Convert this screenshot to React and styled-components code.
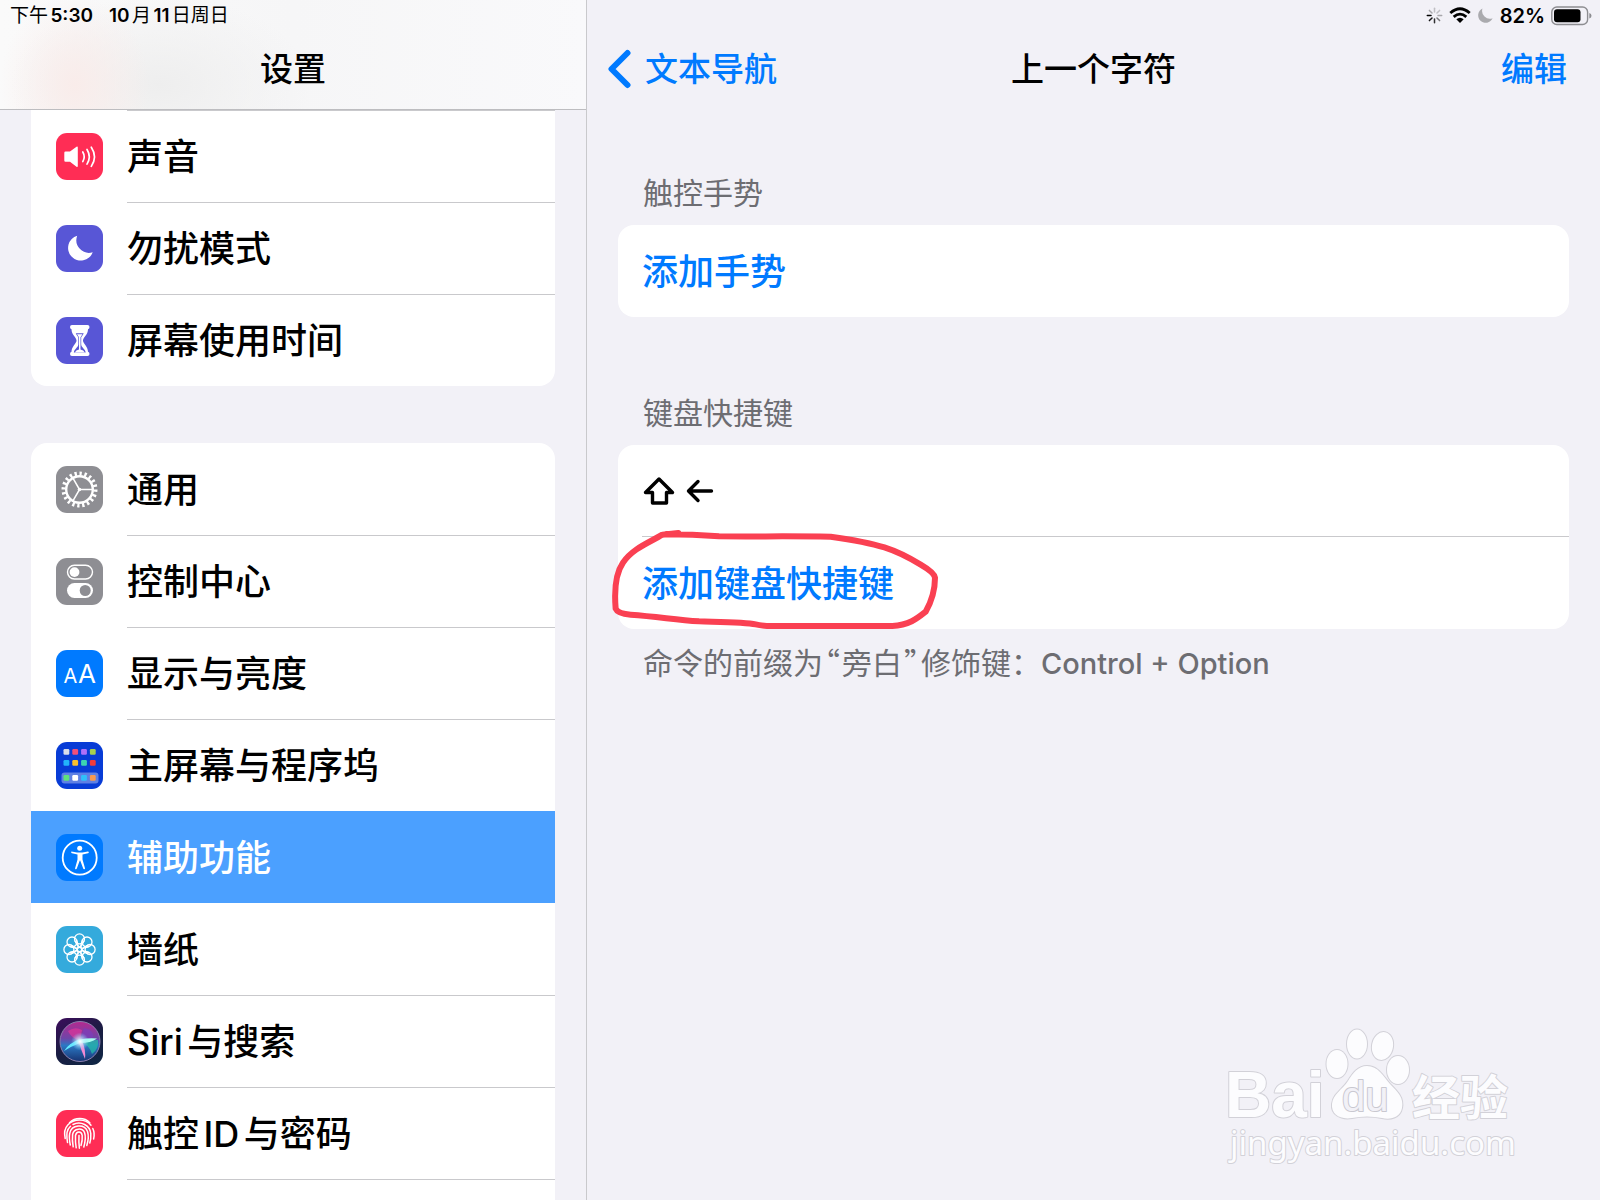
import React, { Component } from 'react';
import styled, { createGlobalStyle } from 'styled-components';

const BLUE = '#007aff';
const LINE = '#c9c9cc';

const GlobalStyle = createGlobalStyle`
  * {
    box-sizing: border-box;
  }
  body {
    margin: 0;
    background: #f2f1f7;
    font-family: Inter, "Noto Sans CJK SC", sans-serif;
    text-autospace: normal;
    color: #000;
  }
  ul {
    margin: 0;
    padding: 0;
    list-style: none;
  }
  button {
    padding: 0;
    border: 0;
    background: none;
    font: inherit;
    text-align: left;
    cursor: pointer;
  }
`;

const Page = styled.div`
  position: relative;
  display: flex;
  height: 100vh;
  overflow: hidden;
`;
const Sidebar = styled.nav`
  flex: 0 0 587px;
  border-right: 1px solid ${LINE};
`;
const SidebarHeader = styled.header`
  height: 110px;
  border-bottom: 1px solid #bdbdc0;
  background:
    radial-gradient(ellipse 75px 90px at 75px 85px, #f9ecea 0%, rgba(249, 236, 234, 0) 100%),
    radial-gradient(ellipse 150px 90px at 160px 85px, #eeeeee 0%, rgba(238, 238, 238, 0) 100%),
    linear-gradient(90deg, #fafafa, #f6f6f7 50%, #f9f9fb);
`;
const StatusBar = styled.div`
  display: flex;
  align-items: center;
  justify-content: ${props => (props.$end ? 'flex-end' : 'flex-start')};
  gap: ${props => (props.$end ? '6px' : '16px')};
  height: 31px;
  padding: 0 ${props => (props.$end ? '8px' : '10px')};
  font-size: ${props => (props.$end ? '20px' : '19px')};
  line-height: 24px;
  font-weight: 600;
`;
const Time = styled.span`
  font-weight: 400;

  b {
    font-weight: 600;
  }
`;
const NavBar = styled.div`
  display: grid;
  grid-template-columns: 1fr auto 1fr;
  align-items: center;
  height: 76px;
  padding: 0 33px 0 20px;
`;
const Title = styled.h1`
  grid-column: 2;
  margin: 0 0 0 13px;
  font-size: 33px;
  line-height: 48px;
  font-weight: 500;
`;
const NavButton = styled.button`
  display: flex;
  align-items: center;
  gap: 13px;
  justify-self: ${props => (props.$end ? 'end' : 'start')};
  color: ${BLUE};
  font-size: 33px;
  line-height: 48px;
  font-weight: 500;
`;
const MenuScroll = styled.div`
  display: flex;
  flex-direction: column;
  gap: 57px;
  padding: 0 31px;
`;
const MenuCard = styled.ul`
  overflow: hidden;
  border-radius: ${props => (props.$cut ? '0 0 16px 16px' : '16px')};
  background: #fff;
`;
const MenuLabel = styled.span`
  display: flex;
  flex: 1;
  align-items: center;
  align-self: stretch;
  padding-bottom: 5px;
  border-top: 1px solid ${props => (props.$line ? LINE : 'transparent')};
`;
const MenuRow = styled.button`
  display: flex;
  align-items: center;
  gap: 24px;
  width: 100%;
  height: 92px;
  padding-left: 25px;
  background: ${props => (props.$active ? '#4ba0ff' : 'transparent')};
  color: ${props => (props.$active ? '#fff' : '#000')};
  font-size: 36px;
  font-weight: 500;
`;
const NextRow = styled.li`
  height: 92px;
  margin-left: 96px;
  border-top: 1px solid ${LINE};
`;
const Tile = styled.svg`
  flex: none;
  width: 47px;
  height: 47px;
  border-radius: 11px;
  background: ${props => props.$bg};
`;

const Detail = styled.main`
  flex: 1;
  min-width: 0;
`;
const Groups = styled.div`
  display: flex;
  flex-direction: column;
  gap: 76px;
  padding: 66px 31px 0;
`;
const GroupTitle = styled.h2`
  margin: 0 25px 12px;
  color: #6d6d72;
  font-size: 30px;
  line-height: 40px;
  font-weight: 400;
`;
const Card = styled.ul`
  border-radius: 16px;
  background: #fff;
`;
const CardRow = styled.li`
  position: relative;
  display: flex;
  height: 92px;
  margin-left: 24px;
  border-bottom: 1px solid ${props => (props.$line ? LINE : 'transparent')};
`;
const Action = styled.button`
  flex: 1;
  padding-bottom: 4px;
  color: ${BLUE};
  font-size: 36px;
  font-weight: 500;
`;
const Shortcut = styled.span`
  display: flex;
  align-items: center;
  gap: 10px;
`;
const Footnote = styled.p`
  margin: 12px 25px 0;
  color: #6d6d72;
  font-size: 30px;
  line-height: 40px;
`;
const Quote = styled.span`
  padding: 0 2px;
  font-family: "Noto Sans CJK SC", sans-serif;
  font-feature-settings: "halt";
`;
const Keys = styled.span`
  font-size: 29px;
  font-weight: 500;
`;
const Marker = styled.svg`
  position: absolute;
  left: -33px;
  top: -11px;
  width: 334px;
  height: 107px;
  pointer-events: none;
`;
const Watermark = styled.svg`
  position: absolute;
  right: 80px;
  bottom: 30px;
  width: 300px;
  height: 150px;
`;

const SoundIcon = () => (
  <Tile viewBox="0 0 47 47" $bg="#ff2d55">
    <path d="M9.5 18.5h4.5l6.5-4.8q1.3-.6 1.3.8v18.5q0 1.4-1.3.8L14 28.8H9.5q-1.2 0-1.2-1.2v-7.9q0-1.2 1.2-1.2z" fill="#fff" />
    <g fill="none" stroke="#fff" strokeWidth="1.700" strokeLinecap="round">
      <path d="M26.800 19q2.800 4.800 0 9.600" />
      <path d="M31 16.500q4.600 7.300 0 14.600" />
      <path d="M35.300 14.200q6.400 9.600 0 19.200" />
    </g>
  </Tile>
);

const MoonIcon = () => (
  <Tile viewBox="0 0 47 47" $bg="#5856d6">
    <path d="M21.200 10.700A12.700 12.700 0 1 0 36.700 27.300A12.700 12.700 0 0 1 21.200 10.700z" fill="#fff" />
  </Tile>
);

const HourglassIcon = () => (
  <Tile viewBox="0 0 47 47" $bg="#5856d6">
    <path d="M16 8h15.500q2 0 2 2t-1.500 2.200c0 5.500-5 8.200-5 11.300s5 6 5 11.300q1.500.2 1.500 2.200t-2 2H16q-2 0-2-2t1.500-2.200c0-5.300 5-8.200 5-11.300s-5-5.800-5-11.300Q14 12 14 10t2-2z" fill="#fff" />
    <path d="M19.800 16.200h7.900q-.9 2.300-2.500 4v7.300c0 3 4 4.300 4.500 8H17.800c.5-3.700 4.500-5 4.500-8v-7.300q-1.600-1.700-2.500-4z" fill="#5856d6" />
    <path d="M21 17.300h5.500l-2 2.900v12.300q3.200.6 4.300 3h-10q1.100-2.400 4.200-3V20.200z" fill="#fff" />
  </Tile>
);

const GearIcon = () => (
  <Tile viewBox="0 0 47 47" $bg="#8e8e93">
    <g fill="none" stroke="#fff">
      <circle cx="23.500" cy="23.500" r="13.300" strokeWidth="2.400" />
      <circle cx="23.500" cy="23.500" r="16" strokeWidth="4" pathLength="100" strokeDasharray="2.300 2.700" />
      <path d="M23.500 23.500H37M23.500 23.500L16.800 11.900M23.500 23.500L16.800 35.100" strokeWidth="1.500" />
    </g>
    <circle cx="23.500" cy="23.500" r="1.800" fill="#fff" />
  </Tile>
);

const ControlsIcon = () => (
  <Tile viewBox="0 0 47 47" $bg="#8e8e93">
    <rect x="11.500" y="7.200" width="25" height="13.800" rx="6.900" fill="none" stroke="#fff" strokeWidth="1.400" />
    <circle cx="18.500" cy="14.100" r="4.900" fill="#fff" />
    <rect x="11" y="25" width="26" height="15" rx="7.500" fill="#fff" />
    <circle cx="29.200" cy="32.500" r="5.500" fill="#8e8e93" />
  </Tile>
);

const DisplayIcon = () => (
  <Tile viewBox="0 0 47 47" $bg={BLUE}>
    <g fill="#fff" fontFamily="Inter, sans-serif" fontWeight="400" textAnchor="middle">
      <text x="14.500" y="33" fontSize="20">A</text>
      <text x="31" y="33" fontSize="26">A</text>
    </g>
  </Tile>
);

const APP_COLORS = [
  ['#d8dcea', '#f0507a', '#b070f8', '#a6cf4e'],
  ['#22b4fb', '#fcc02e', '#3dd3b0', '#f03c3c'],
  ['#5ee27c', '#ffffff', '#2fc0fb', '#f79a50'],
];
const APP_ROWS = [7, 18, 33];

const HomeIcon = () => (
  <Tile viewBox="0 0 47 47" $bg="#083cd6">
    <rect x="5.500" y="30.500" width="37" height="11" rx="3" fill="#fff" fillOpacity=".35" />
    {APP_COLORS.map((row, r) =>
      row.map((color, c) => (
        <rect key={color} x={7.5 + c * 8.8} y={APP_ROWS[r]} width="5.800" height="5.800" rx="1.200" fill={color} />
      ))
    )}
  </Tile>
);

const AccessIcon = () => (
  <Tile viewBox="0 0 47 47" $bg={BLUE}>
    <circle cx="23.700" cy="23.700" r="17" fill="none" stroke="#fff" strokeWidth="1.800" />
    <circle cx="23.700" cy="14.200" r="2.500" fill="#fff" />
    <path d="M15.5 17.6l5.5 1h5.4l5.5-1q1 0 .9.8-.1.6-.8.8l-5.5 1.3v5l2.5 8.7q.1.9-.7 1t-1.1-.6l-3-8.100h-.4l-3 8.100q-.4.8-1.100.6-.8-.2-.6-1l2.400-8.700v-5l-5.500-1.300q-.7-.2-.8-.8 0-.8.300-.8z" fill="#fff" />
  </Tile>
);

const PETALS = [0, 45, 90, 135, 180, 225, 270, 315];

const WallpaperIcon = () => (
  <Tile viewBox="0 0 47 47" $bg="#34aadc">
    <g fill="none" stroke="#fff" strokeWidth="1.300">
      {PETALS.map(angle => (
        <g key={angle} transform={`rotate(${angle} 23.5 23.5)`}>
          <circle cx="23.500" cy="12.900" r="5" />
          <path d="M18.800 14.500Q20.500 19 23.500 21.300Q26.500 19 28.200 14.500" />
        </g>
      ))}
      <circle cx="23.500" cy="23.500" r="2.200" />
    </g>
  </Tile>
);

const SiriIcon = () => (
  <Tile viewBox="0 0 47 47" $bg="linear-gradient(150deg, #3d0d5c, #1a1d42 50%, #0e2744)">
    <defs>
      <linearGradient id="siriOrb" x1="0.500" y1="0" x2="0.500" y2="1">
        <stop offset="0" stopColor="#b5298f" />
        <stop offset=".42" stopColor="#6f45a8" />
        <stop offset=".6" stopColor="#2b78c4" />
        <stop offset="1" stopColor="#173372" />
      </linearGradient>
      <radialGradient id="siriGlow">
        <stop offset="0" stopColor="#fff" />
        <stop offset=".3" stopColor="#d6f4ff" stopOpacity=".8" />
        <stop offset="1" stopColor="#7fd8ff" stopOpacity="0" />
      </radialGradient>
    </defs>
    <circle cx="24" cy="23.500" r="20" fill="url(#siriOrb)" stroke="#8b7fae" strokeWidth="1" />
    <path d="M24 23Q15 20 12 13Q19 8 26 12z" fill="#e0359a" opacity=".7" />
    <path d="M24 23L28 10Q38 12 37 19z" fill="#7c3fb8" opacity=".8" />
    <path d="M24 23L42 22Q43 31 36 36Q34 28 24 23z" fill="#24b9a8" opacity=".75" />
    <path d="M24 25Q16 28 8 33Q13 25 24 21z" fill="#62e8ff" />
    <path d="M22.500 23Q25 32 29 41Q30 32 26 23z" fill="#f28ad4" />
    <path d="M24 21.500Q33 19.500 41 20.500Q35 25 24 25z" fill="#a8fff0" />
    <circle cx="24" cy="23.500" r="9" fill="url(#siriGlow)" />
  </Tile>
);

const TouchIcon = () => (
  <Tile viewBox="0 0 47 47" $bg="#ff2d55">
    <g fill="none" stroke="#fff" strokeWidth="1.500" strokeLinecap="round">
      <path d="M13.500 12.800C19 7.200 28.500 7.200 33.800 12.800" />
      <path d="M9.200 28.500C7.800 22.500 9 18 11.800 15C18 8.300 29.500 8.600 35 15.200" />
      <path d="M36.800 18.500C38.500 22 38.500 25.500 37.600 29" />
      <path d="M11.500 32.500C10.300 24 10.500 19.600 14.500 16.200" />
      <path d="M17 14.500C25 10.500 34 15.500 34.800 23.500C35 27 34.800 30 33.800 33" />
      <path d="M14.300 35C13.300 30 13.200 26 13.700 23.500C15.500 14.200 28.500 13.600 31.500 21.500C32.800 25.500 32.200 31 30.800 35.500" />
      <path d="M17.200 36.800C16.200 31.500 16.200 28 16.600 24.500C17.800 17.800 26.500 17.500 28.600 22.800C30 27 29.200 32 27.800 37" />
      <path d="M20.200 37.800C19.400 33 19.300 29 19.500 25.500C20.500 20.800 25.500 20.800 26.200 25.500C26.500 29.500 26 32.500 25 35.500" />
      <path d="M23 25.500C22.700 30 22.800 34 23.400 38.200" />
    </g>
  </Tile>
);

const Spinner = () => (
  <svg width="17" height="17" viewBox="0 0 17 17" stroke="#000" strokeWidth="1.500" strokeLinecap="round">
    {[0.2, 0.2, 0.3, 0.5, 0.8, 0.9, 1, 0.3].map((opacity, i) => (
      <path key={i} d="M8.500 5V1.300" opacity={opacity} transform={`rotate(${i * 45} 8.5 8.5)`} />
    ))}
  </svg>
);

const Wifi = () => (
  <svg width="22" height="17" viewBox="0 0 22 17">
    <g fill="none" stroke="#000" strokeWidth="2.800">
      <path d="M1.300 6Q11-2.500 20.700 6" />
      <path d="M4.700 9.900Q11 4.300 17.300 9.900" />
    </g>
    <path d="M7.300 12.300Q11 9.200 14.700 12.300L11 16z" />
  </svg>
);

const StatusMoon = () => (
  <svg width="17" height="17" viewBox="0 0 17 17">
    <path d="M5.500 1.500A7.500 7.500 0 1 0 15.600 11.200A7.800 7.800 0 0 1 5.500 1.500z" fill="#aaaaae" />
  </svg>
);

const Battery = () => (
  <svg width="41" height="20" viewBox="0 0 41 20">
    <rect x=".8" y="1" width="35.800" height="17.500" rx="5" fill="none" stroke="#8d8d91" strokeWidth="1.400" />
    <rect x="3" y="3.200" width="26.500" height="13" rx="3" />
    <path d="M38.300 7Q40.500 7.800 40.500 9.800T38.300 12.600z" fill="#8d8d91" />
  </svg>
);

const MENU = [
  [
    { label: '声音', icon: SoundIcon, line: true },
    { label: '勿扰模式', icon: MoonIcon, line: true },
    { label: '屏幕使用时间', icon: HourglassIcon, line: true },
  ],
  [
    { label: '通用', icon: GearIcon },
    { label: '控制中心', icon: ControlsIcon, line: true },
    { label: '显示与亮度', icon: DisplayIcon, line: true },
    { label: '主屏幕与程序坞', icon: HomeIcon, line: true },
    { label: '辅助功能', icon: AccessIcon, active: true },
    { label: '墙纸', icon: WallpaperIcon },
    { label: 'Siri与搜索', icon: SiriIcon, line: true },
    { label: '触控ID与密码', icon: TouchIcon, line: true },
  ],
];

class Menu extends Component {
  render() {
    return (
      <Sidebar>
        <SidebarHeader>
          <StatusBar>
            <Time>下午<b>5:30</b></Time>
            <Time><b>10</b>月<b>11</b>日周日</Time>
          </StatusBar>
          <NavBar>
            <Title>设置</Title>
          </NavBar>
        </SidebarHeader>
        <MenuScroll>
          {MENU.map((group, i) => (
            <MenuCard key={i} $cut={i === 0}>
              {group.map(item => (
                <li key={item.label}>
                  <MenuRow type="button" $active={item.active}>
                    <item.icon />
                    <MenuLabel $line={item.line}>{item.label}</MenuLabel>
                  </MenuRow>
                </li>
              ))}
              {i === 1 && <NextRow />}
            </MenuCard>
          ))}
        </MenuScroll>
      </Sidebar>
    );
  }
}

const BaiduMark = () => (
  <Watermark viewBox="0 0 300 150">
    <g fill="#fcfcfe" stroke="#d2d1d8" strokeWidth="2" paintOrder="stroke" strokeLinejoin="round">
      <text x="5" y="97" fontFamily="Liberation Sans, sans-serif" fontWeight="700" fontSize="64">Bai</text>
      <ellipse cx="117" cy="44" rx="10.500" ry="14" />
      <ellipse cx="137" cy="24" rx="10" ry="14.500" />
      <ellipse cx="162.500" cy="26" rx="10.500" ry="14" transform="rotate(10 162.5 26)" />
      <ellipse cx="178" cy="50" rx="11" ry="14" />
      <path d="M147 46C158 46 163 56 170 64C178 72 184 78 182 88C180 98 170 100 162 98C152 96 142 96 132 98C120 100 111 94 112 84C113 74 122 70 128 61C133 53 138 46 147 46z" />
      <text x="192" y="95" fontFamily="Noto Sans CJK SC, sans-serif" fontWeight="700" fontSize="48">经验</text>
      <text x="10" y="135" fontFamily="Noto Sans, sans-serif" fontSize="33">jingyan.baidu.com</text>
      <text x="122" y="91" fontFamily="Liberation Sans, sans-serif" fontSize="42" fill="#f2f1f7" stroke="#c9c8d0">du</text>
    </g>
  </Watermark>
);

class App extends Component {
  render() {
    return (
      <Page>
        <GlobalStyle />
        <Menu />
        <Detail>
          <StatusBar $end>
            <Spinner />
            <Wifi />
            <StatusMoon />
            <span>82%</span>
            <Battery />
          </StatusBar>
          <NavBar>
            <NavButton type="button">
              <svg width="25" height="40" viewBox="0 0 25 40" fill="none" stroke={BLUE} strokeWidth="6" strokeLinecap="round" strokeLinejoin="round">
                <path d="M20.500 4L4.500 20L20.500 36" />
              </svg>
              文本导航
            </NavButton>
            <Title>上一个字符</Title>
            <NavButton type="button" $end>编辑</NavButton>
          </NavBar>
          <Groups>
            <section>
              <GroupTitle>触控手势</GroupTitle>
              <Card>
                <CardRow>
                  <Action type="button">添加手势</Action>
                </CardRow>
              </Card>
            </section>
            <section>
              <GroupTitle>键盘快捷键</GroupTitle>
              <Card>
                <CardRow $line>
                  <Shortcut>
                    <svg width="34" height="30" viewBox="0 0 34 30" fill="none" stroke="#000" strokeWidth="3.400" strokeLinejoin="round">
                      <path d="M17 3L30.500 16.500H24.500V27H10.500V16.500H3.500z" />
                    </svg>
                    <svg width="28" height="26" viewBox="0 0 28 26" fill="none" stroke="#000" strokeWidth="3.400" strokeLinecap="round" strokeLinejoin="round">
                      <path d="M25.500 13H3M12 3.500L2.500 13L12 22.500" />
                    </svg>
                  </Shortcut>
                </CardRow>
                <CardRow>
                  <Action type="button">添加键盘快捷键</Action>
                  <Marker viewBox="30 440 1002 321" fill="none" stroke="#fa4052" strokeWidth="18" strokeLinecap="round" strokeLinejoin="round">
                    <path d="M238 461L190 466C150 490 100 508 72 550C48 585 46 640 50 688Q56 703 95 706C180 712 230 722 300 726C380 728 440 728 470 735Q490 740 520 740H880C930 738 955 717 980 697C998 665 1008 630 1008 595Q1006 580 965 556C890 510 840 492 695 472C560 470 480 472 360 471C320 468 280 465 200 465" />
                  </Marker>
                </CardRow>
              </Card>
              <Footnote>
                命令的前缀为<Quote>“</Quote>旁白<Quote>”</Quote>修饰键：<Keys>Control + Option</Keys>
              </Footnote>
            </section>
          </Groups>
        </Detail>
        <BaiduMark />
      </Page>
    );
  }
}

export default App;
